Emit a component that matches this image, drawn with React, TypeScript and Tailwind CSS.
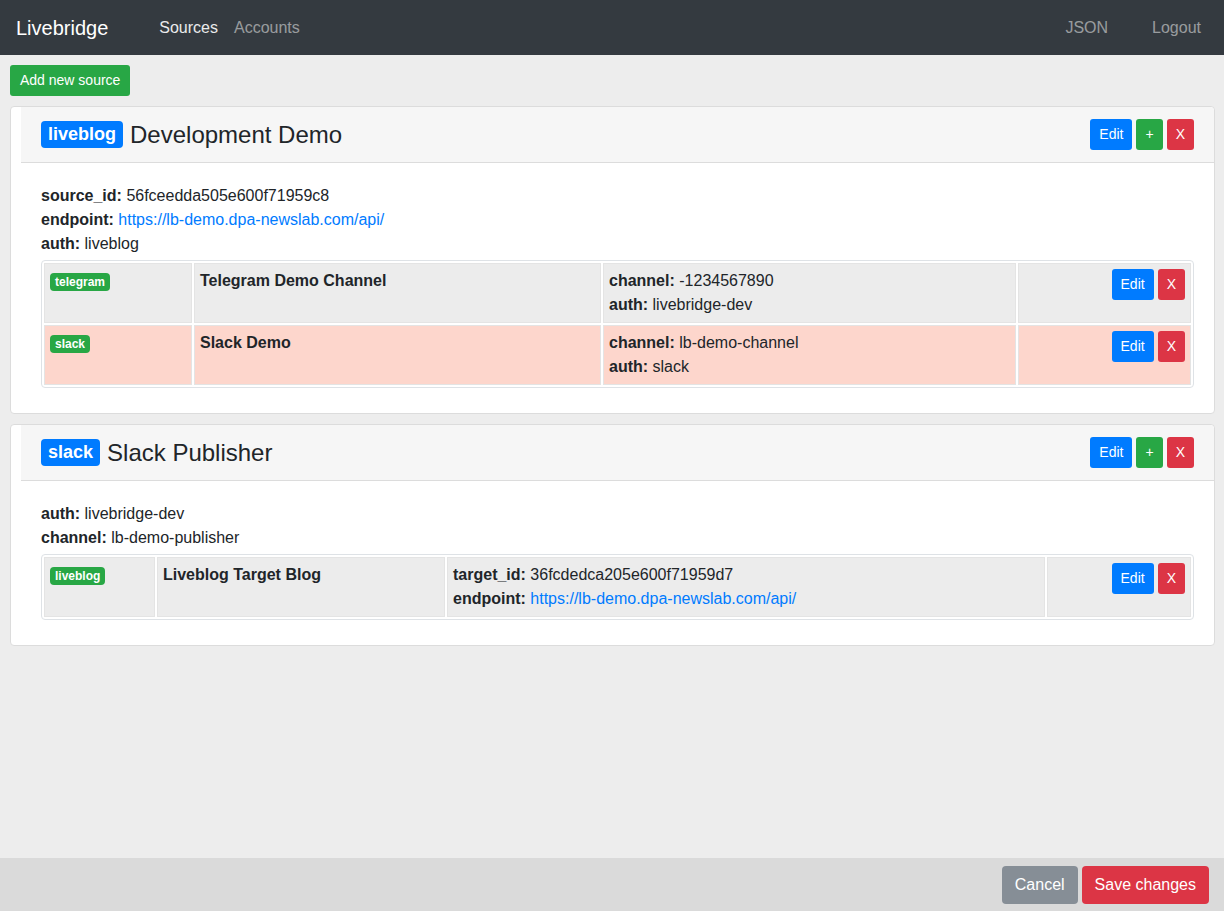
import React from "react";

type Row = {
  type: string;
  name: string;
  fields: { k: string; v: string; link?: boolean }[];
  tone: "gray" | "red";
};

type Source = {
  type: string;
  title: string;
  fields: { k: string; v: string; link?: boolean }[];
  cols: string[];
  rows: Row[];
};

const sources: Source[] = [
  {
    type: "liveblog",
    title: "Development Demo",
    fields: [
      { k: "source_id", v: "56fceedda505e600f71959c8" },
      { k: "endpoint", v: "https://lb-demo.dpa-newslab.com/api/", link: true },
      { k: "auth", v: "liveblog" },
    ],
    cols: ["w-[148px]", "w-[407px]", "w-[413px]", "w-[173px]"],
    rows: [
      {
        type: "telegram",
        name: "Telegram Demo Channel",
        fields: [
          { k: "channel", v: "-1234567890" },
          { k: "auth", v: "livebridge-dev" },
        ],
        tone: "gray",
      },
      {
        type: "slack",
        name: "Slack Demo",
        fields: [
          { k: "channel", v: "lb-demo-channel" },
          { k: "auth", v: "slack" },
        ],
        tone: "red",
      },
    ],
  },
  {
    type: "slack",
    title: "Slack Publisher",
    fields: [
      { k: "auth", v: "livebridge-dev" },
      { k: "channel", v: "lb-demo-publisher" },
    ],
    cols: ["w-[111px]", "w-[288px]", "w-[598px]", "w-[144px]"],
    rows: [
      {
        type: "liveblog",
        name: "Liveblog Target Blog",
        fields: [
          { k: "target_id", v: "36fcdedca205e600f71959d7" },
          { k: "endpoint", v: "https://lb-demo.dpa-newslab.com/api/", link: true },
        ],
        tone: "gray",
      },
    ],
  },
];

function Field({ k, v, link }: { k: string; v: string; link?: boolean }) {
  return (
    <div className="leading-6">
      <span className="font-bold">{k}:</span>{" "}
      {link ? <a className="text-[#007bff]">{v}</a> : <span>{v}</span>}
    </div>
  );
}

function SmallBtn({ color, children }: { color: string; children: React.ReactNode }) {
  return (
    <button className={`${color} text-white text-[14px] leading-[21px] h-[31px] px-[9px] rounded-[3px]`}>
      {children}
    </button>
  );
}

function Card({ s }: { s: Source }) {
  return (
    <div className="bg-white border border-[#dcdcdc] rounded-[4px] pl-[10px]">
      <div className="h-[56px] bg-[#f6f6f6] border-b border-[#dcdcdc] px-[20px] flex items-center justify-between rounded-tr-[4px]">
        <div className="flex items-center text-[24px] leading-[29px] text-[#212529] -mt-[1px]">
          <span className="bg-[#007bff] text-white font-bold text-[18px] leading-[18px] px-[7px] py-[4.5px] rounded-[4px] mr-[7px]">
            {s.type}
          </span>
          <span>{s.title}</span>
        </div>
        <div className="flex gap-[4px]">
          <SmallBtn color="bg-[#007bff]">Edit</SmallBtn>
          <SmallBtn color="bg-[#28a745]">+</SmallBtn>
          <SmallBtn color="bg-[#dc3545]">X</SmallBtn>
        </div>
      </div>
      <div className="pt-[21px] pb-[20px] px-[20px]">
        {s.fields.map((f) => (
          <Field key={f.k} {...f} />
        ))}
        <table className="w-full table-fixed border-separate border-spacing-[2px] border border-[#dee2e6] rounded-[4px] mt-[4px] mb-[5px]">
          <colgroup>
            {s.cols.map((c, i) => (
              <col key={i} className={c} />
            ))}
          </colgroup>
          <tbody>
            {s.rows.map((r) => {
              const bg = r.tone === "gray" ? "bg-[#ececec]" : "bg-[#fdd6cc]";
              const td = `${bg} border border-[#e4e4e4] p-[5px] align-top h-[60px]`;
              return (
                <tr key={r.name}>
                  <td className={td}>
                    <span className="inline-block bg-[#28a745] text-white font-bold text-[12px] leading-[12px] px-[5px] py-[3px] rounded-[4px]">
                      {r.type}
                    </span>
                  </td>
                  <td className={`${td} font-bold leading-6`}>{r.name}</td>
                  <td className={td}>
                    {r.fields.map((f) => (
                      <Field key={f.k} {...f} />
                    ))}
                  </td>
                  <td className={td}>
                    <div className="flex justify-end gap-[4px]">
                      <SmallBtn color="bg-[#007bff]">Edit</SmallBtn>
                      <SmallBtn color="bg-[#dc3545]">X</SmallBtn>
                    </div>
                  </td>
                </tr>
              );
            })}
          </tbody>
        </table>
      </div>
    </div>
  );
}

export default function App() {
  return (
    <div
      className="min-h-[911px] h-screen flex flex-col bg-[#ededed] text-[16px] text-[#212529]"
      style={{ fontFamily: '"Liberation Sans", Arial, sans-serif' }}
    >
      <nav className="h-[55px] shrink-0 bg-[#343a40] flex items-center pl-[16px] pr-[15px]">
        <span className="text-white text-[20px] leading-[30px]">Livebridge</span>
        <div className="flex ml-[43px]">
          <a className="px-[8px] text-white/90">Sources</a>
          <a className="px-[8px] text-white/50">Accounts</a>
        </div>
        <div className="ml-auto flex gap-[28px]">
          <a className="px-[8px] text-white/50">JSON</a>
          <a className="px-[8px] text-white/50">Logout</a>
        </div>
      </nav>
      <main className="flex-1 pt-[10px] pl-[10px] pr-[9px] overflow-hidden">
        <button className="bg-[#28a745] text-white text-[14px] leading-[21px] h-[31px] px-[10px] rounded-[3px] mb-[10px]">
          Add new source
        </button>
        <div className="flex flex-col gap-[10px]">
          {sources.map((s) => (
            <Card key={s.title} s={s} />
          ))}
        </div>
      </main>
      <footer className="h-[53px] shrink-0 bg-[#dadada] flex justify-end items-start pt-[8px] pr-[15px] gap-[4px]">
        <button className="bg-[#868e96] text-white text-[16px] leading-[24px] h-[38px] px-[13px] rounded-[4px]">
          Cancel
        </button>
        <button className="bg-[#dc3545] text-white text-[16px] leading-[24px] h-[38px] px-[13px] rounded-[4px]">
          Save changes
        </button>
      </footer>
    </div>
  );
}
